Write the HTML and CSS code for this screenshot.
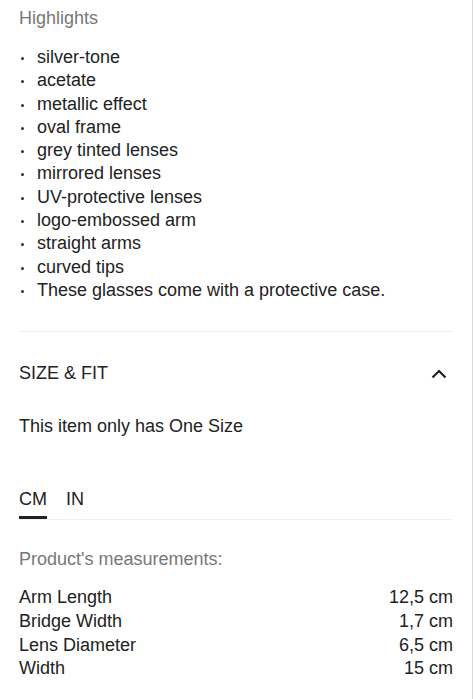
FILE: index.html
```html
<!DOCTYPE html>
<html>
<head>
<meta charset="utf-8">
<link rel="stylesheet" href="styles.css">
</head>
<body>
<div class="page">
  <section class="highlights">
    <h3 class="muted-title">Highlights</h3>
    <ul class="bullets">
      <li>silver-tone</li>
      <li>acetate</li>
      <li>metallic effect</li>
      <li>oval frame</li>
      <li>grey tinted lenses</li>
      <li>mirrored lenses</li>
      <li>UV-protective lenses</li>
      <li>logo-embossed arm</li>
      <li>straight arms</li>
      <li>curved tips</li>
      <li>These glasses come with a protective case.</li>
    </ul>
  </section>
  <section class="size-fit">
    <div class="acc-head">
      <span>SIZE &amp; FIT</span>
      <svg class="chev" width="16" height="10" viewBox="0 0 16 10"><path d="M1.5 8.5 L8 2 L14.5 8.5" fill="none" stroke="#222" stroke-width="2.2"/></svg>
    </div>
    <p class="one-size">This item only has One Size</p>
    <div class="tabs">
      <span class="tab active">CM</span>
      <span class="tab">IN</span>
    </div>
    <p class="muted-sub">Product's measurements:</p>
    <dl class="measures">
      <div class="row"><dt>Arm Length</dt><dd>12,5 cm</dd></div>
      <div class="row"><dt>Bridge Width</dt><dd>1,7 cm</dd></div>
      <div class="row"><dt>Lens Diameter</dt><dd>6,5 cm</dd></div>
      <div class="row"><dt>Width</dt><dd>15 cm</dd></div>
    </dl>
  </section>
</div>
</body>
</html>
```
FILE: styles.css
```css
html, body { margin: 0; padding: 0; background: #fff; }
body {
  font-family: "Liberation Sans", Arial, sans-serif;
  color: #222;
  font-size: 18px;
  height: 699px;
  overflow: hidden;
  border-right: 1px solid #d8d8d8;
  box-sizing: border-box;
}
.page { padding: 0 19px 0 19px; }
.muted-title {
  margin: 0;
  padding-top: 7px;
  font-weight: normal;
  font-size: 18px;
  line-height: 22px;
  color: #777;
}
.bullets {
  list-style: none;
  margin: 17px 0 0 0;
  padding: 0;
}
.bullets li {
  position: relative;
  padding-left: 18px;
  line-height: 23.3px;
}
.bullets li::before {
  content: "";
  position: absolute;
  left: 2px;
  top: 11px;
  width: 3px;
  height: 3px;
  border-radius: 50%;
  background: #333;
}
.highlights {
  padding-bottom: 29px;
  border-bottom: 1px solid #f0f0f0;
}
.acc-head {
  display: flex;
  justify-content: space-between;
  align-items: center;
  margin-top: 30px;
  line-height: 22px;
}
.chev { margin-right: 6px; margin-top: 2px; }
.one-size { margin: 31px 0 0 0; line-height: 22px; }
.tabs {
  margin-top: 51px;
  display: flex;
  gap: 19px;
  border-bottom: 1px solid #f0f0f0;
}
.tab { line-height: 22px; padding-bottom: 9px; }
.tab.active { box-shadow: inset 0 -3px 0 #222; }
.muted-sub { margin: 28px 0 0 0; color: #777; line-height: 22px; }
.measures { margin: 16px 0 0 0; }
.row { display: flex; justify-content: space-between; line-height: 23.7px; }
.row dt, .row dd { margin: 0; }
```
